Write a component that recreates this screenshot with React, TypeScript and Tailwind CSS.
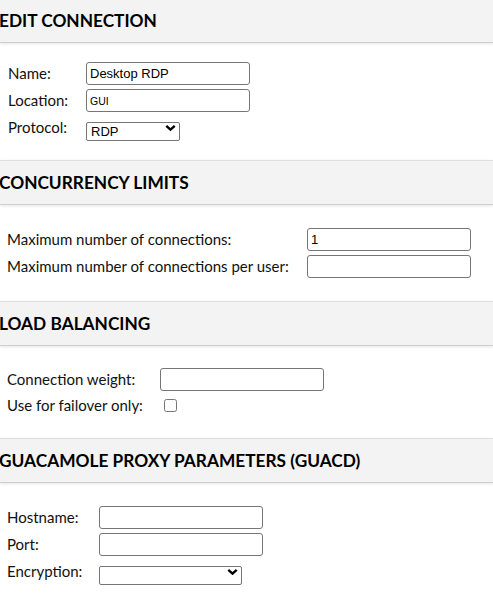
import React from 'react'

function Chevron() {
    return (
        <svg
            className="pointer-events-none absolute right-[4px] top-1/2 -translate-y-1/2"
            width="11"
            height="7"
            viewBox="0 0 11 7"
        >
            <path d="M1.3 1.3 L5.5 5.2 L9.7 1.3" fill="none" stroke="#000" strokeWidth="2.3" />
        </svg>
    )
}

function TextInput({ value = '', small = false }: { value?: string; small?: boolean }) {
    return (
        <input
            type="text"
            defaultValue={value}
            className={
                'h-[23px] w-[164px] rounded-[3px] border border-[#767676] bg-white px-[3px] text-black outline-none ' +
                (small ? 'text-[10.5px]' : 'text-[13px]')
            }
            style={{ fontFamily: '"Liberation Sans", Arial, sans-serif' }}
        />
    )
}

function Select({ value, width }: { value: string; width: string }) {
    return (
        <div className={'relative h-[19px] ' + width}>
            <select
                defaultValue={value}
                className="h-[19px] w-full appearance-none rounded-[2px] border border-[#767676] bg-white pl-[4px] text-[13px] leading-none text-black outline-none"
                style={{ fontFamily: '"Liberation Sans", Arial, sans-serif' }}
            >
                <option value={value}>{value}</option>
            </select>
            <Chevron />
        </div>
    )
}

function Header({ title, first = false }: { title: string; first?: boolean }) {
    return (
        <div
            className={
                'flex h-[45px] items-center border-t border-b border-t-[#dedede] border-b-[#cfcfcf] bg-[#f3f3f3] shadow-[0_1px_3px_rgba(0,0,0,0.10)] ' +
                (first ? '-mt-[2px]' : '')
            }
        >
            <h2 className="-ml-[1px] text-[17.3px] font-bold text-black">{title}</h2>
        </div>
    )
}

function Row({ label, col, children, h = 'h-[27px]' }: { label: string; col: string; children: React.ReactNode; h?: string }) {
    return (
        <div className={'flex items-center ' + h}>
            <div className={'shrink-0 text-[15px] text-[#111] ' + col}>{label}</div>
            {children}
        </div>
    )
}

export default function App() {
    return (
        <div className="min-h-screen overflow-hidden bg-white" style={{ fontFamily: 'Lato, "Open Sans", sans-serif' }}>
            <Header title="EDIT CONNECTION" first />
            <div className="pl-[7px] pt-[17px] pb-[19px]">
                <Row label="Name:" col="w-[79px] pl-[1px]">
                    <TextInput value="Desktop RDP" />
                </Row>
                <Row label="Location:" col="w-[79px] pl-[1px]">
                    <TextInput value="GUI" small />
                </Row>
                <Row label="Protocol:" col="w-[79px] pl-[1px]">
                    <Select value="RDP" width="w-[94px]" />
                </Row>
            </div>

            <Header title="CONCURRENCY LIMITS" />
            <div className="pl-[7px] pt-[21px] pb-[21px]">
                <Row label="Maximum number of connections:" col="w-[300px]">
                    <TextInput value="1" />
                </Row>
                <Row label="Maximum number of connections per user:" col="w-[300px]">
                    <TextInput />
                </Row>
            </div>

            <Header title="LOAD BALANCING" />
            <div className="pl-[7px] pt-[20px] pb-[21px]">
                <Row label="Connection weight:" col="w-[153px]">
                    <TextInput />
                </Row>
                <Row label="Use for failover only:" col="w-[153px]" h="h-[24px]">
                    <input type="checkbox" className="m-0 ml-[4px] h-[13px] w-[13px]" />
                </Row>
            </div>

            <Header title="GUACAMOLE PROXY PARAMETERS (GUACD)" />
            <div className="pl-[7px] pt-[21px] pb-[20px]">
                <Row label="Hostname:" col="w-[92px]">
                    <TextInput />
                </Row>
                <Row label="Port:" col="w-[92px]">
                    <TextInput />
                </Row>
                <Row label="Encryption:" col="w-[92px]">
                    <Select value="" width="w-[143px]" />
                </Row>
            </div>
        </div>
    )
}
